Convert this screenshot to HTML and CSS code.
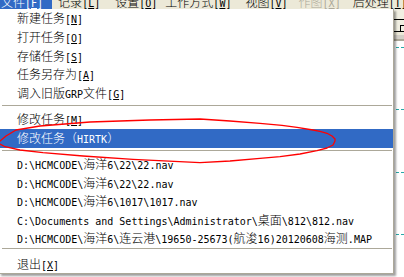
FILE: index.html
```html
<!DOCTYPE html>
<html lang="zh-CN">
<head>
<meta charset="utf-8">
<title>文件菜单</title>
<link rel="stylesheet" href="styles.css">
</head>
<body>
<div class="app">
  <div class="menubar">
    <div class="mb-item mb-file">文件<span class="m">[<u>F</u>]</span></div>
    <div class="mb-item mb-rec">记录<span class="m">[<u>L</u>]</span></div>
    <div class="mb-item mb-set">设置<span class="m">[<u>O</u>]</span></div>
    <div class="mb-item mb-work">工作方式<span class="m">[<u>W</u>]</span></div>
    <div class="mb-item mb-view">视图<span class="m">[<u>V</u>]</span></div>
    <div class="mb-item mb-draw">作图<span class="m">[<u>X</u>]</span></div>
    <div class="mb-item mb-post">后处理<span class="m">[<u>T</u>]</span></div>
  </div>
  <div class="workspace">
    <div class="toolbar">
      <div class="tb-row"><div class="tb-tab"></div></div>
      <div class="tb-foot"></div>
    </div>
    <div class="canvas">
      <div class="gridline"></div>
      <div class="gridline"></div>
      <div class="gridline"></div>
      <div class="gridline"></div>
    </div>
  </div>

  <div class="dropdown">
    <div class="dd-item">新建任务<span class="m">[<u>N</u>]</span></div>
    <div class="dd-item">打开任务<span class="m">[<u>O</u>]</span></div>
    <div class="dd-item">存储任务<span class="m">[<u>S</u>]</span></div>
    <div class="dd-item">任务另存为<span class="m">[<u>A</u>]</span></div>
    <div class="dd-item">调入旧版<span class="m">GRP</span>文件<span class="m">[<u>G</u>]</span></div>
    <div class="dd-sep sep-a"></div>
    <div class="dd-item">修改任务<span class="m">[<u>M</u>]</span></div>
    <div class="dd-item dd-active">修改任务（<span class="m">HIRTK</span>）</div>
    <div class="dd-sep sep-b"></div>
    <div class="dd-item dd-path"><span class="m">D:\HCMCODE\</span>海洋<span class="m">6\22\22.nav</span></div>
    <div class="dd-item dd-path"><span class="m">D:\HCMCODE\</span>海洋<span class="m">6\22\22.nav</span></div>
    <div class="dd-item dd-path"><span class="m">D:\HCMCODE\</span>海洋<span class="m">6\1017\1017.nav</span></div>
    <div class="dd-item dd-path"><span class="m">C:\Documents and Settings\Administrator\</span>桌面<span class="m">\812\812.nav</span></div>
    <div class="dd-item dd-path"><span class="m">D:\HCMCODE\</span>海洋<span class="m">6\</span>连云港<span class="m">\19650-25673(</span>航浚<span class="m">16)20120608</span>海测<span class="m">.MAP</span></div>
    <div class="dd-sep sep-c"></div>
    <div class="dd-item">退出<span class="m">[<u>X</u>]</span></div>
  </div>

  <svg class="annot" width="404" height="277" viewBox="0 0 404 277">
    <polyline points="-3,143 0,141 6,136 16,130 40,126 90,122 150,120 200,119 230,121 260,123.3 282,125.3 297,127.3 313,130 320,131.3 327,133.3 332,136 335,139 335,141 333,145 327,148 317,150.7 300,154 280,156.7 260,158.3 230,161 200,162.7 133,159.3 83,156 43,152.7 20,150 5,146.7 0,144 -3,142"/>
  </svg>
</div>
</body>
</html>
```

FILE: styles.css
```css
* {
  box-sizing: border-box;
  margin: 0;
  padding: 0;
}

html,
body {
  width: 404px;
  height: 277px;
  overflow: hidden;
}

body {
  background: #ffffff;
  font-family: "Noto Sans CJK SC", "Noto Sans", sans-serif;
  font-size: 12px;
  font-weight: 300;
  color: #000000;
}

.app {
  position: relative;
  width: 404px;
  height: 277px;
  display: flex;
  flex-direction: column;
  overflow: hidden;
}

/* Latin runs: 6px-per-char monospace, like SimSun */
.m {
  font-family: "DejaVu Sans Mono", "Liberation Mono", monospace;
  font-size: 10px;
  font-weight: 400;
}

u {
  text-decoration: underline;
  text-underline-offset: 1px;
}

/* ---------- menu bar ---------- */
.menubar {
  flex: none;
  display: flex;
  height: 9px;
  overflow: hidden;
  background: #ece9d8;
}

.mb-item {
  flex: none;
  height: 20px;
  line-height: 20px;
  margin-top: -8px;
  white-space: nowrap;
}

.mb-file {
  padding: 0 9px 0 1px;
  background: #316ac5;
  color: #ffffff;
}

.mb-rec { margin-left: 6px; }
.mb-set { margin-left: 15px; }
.mb-work { margin-left: 8px; }
.mb-view { margin-left: 14px; }
.mb-draw { margin-left: 11px; color: #aca899; }
.mb-post { margin-left: 12px; }

/* ---------- underlying window ---------- */
.workspace {
  flex: 1;
  display: flex;
  flex-direction: column;
}

.toolbar {
  flex: none;
  height: 32px;
  padding-top: 10px;
  background: #f1efe2;
}

.tb-row {
  height: 13px;
  border-top: 1px solid #000000;
  border-bottom: 1px solid #000000;
  display: flex;
  justify-content: flex-end;
  align-items: flex-end;
}

.tb-tab {
  width: 4px;
  height: 6px;
  border-top: 1px solid #000000;
  border-left: 1px solid #000000;
}

.tb-foot {
  height: 9px;
  border-top: 3px solid #ece9d8;
  border-bottom: 2px solid #aca899;
  background: #d4d0c8;
}

.canvas {
  flex: 1;
  background: #ffffff;
  padding-top: 6px;
}

.gridline {
  height: 1px;
  border-top: 1px dashed #27a8a8;
  margin-bottom: 61.3px;
}

/* ---------- dropdown menu ---------- */
.dropdown {
  position: absolute;
  left: -1px;
  top: 9px;
  width: 395px;
  background: #ffffff;
  border: 1px solid #aca899;
  border-top: none;
  box-shadow: 2px 2px 2px rgba(0, 0, 0, 0.38);
  display: flex;
  flex-direction: column;
}

.dd-item {
  height: 18.75px;
  line-height: 17.75px;
  padding-left: 17px;
  white-space: nowrap;
}

.dd-path {
  height: 18.6px;
}

.dd-active {
  background: #316ac5;
  color: #ffffff;
}

.dd-sep {
  height: 1px;
  background: #aca899;
  margin-left: 2px;
  margin-right: 1px;
}

.sep-a { margin-top: 2.25px; margin-bottom: 4px; }
.sep-b { margin-top: 2.5px; margin-bottom: 4px; }
.sep-c { margin-top: 0; margin-bottom: 5.75px; }

/* ---------- red hand-drawn annotation ---------- */
.annot {
  position: absolute;
  left: 0;
  top: 0;
  pointer-events: none;
}

.annot polyline {
  fill: none;
  stroke: #ff0000;
  stroke-width: 1.3;
  stroke-linejoin: round;
  stroke-linecap: round;
}
```
